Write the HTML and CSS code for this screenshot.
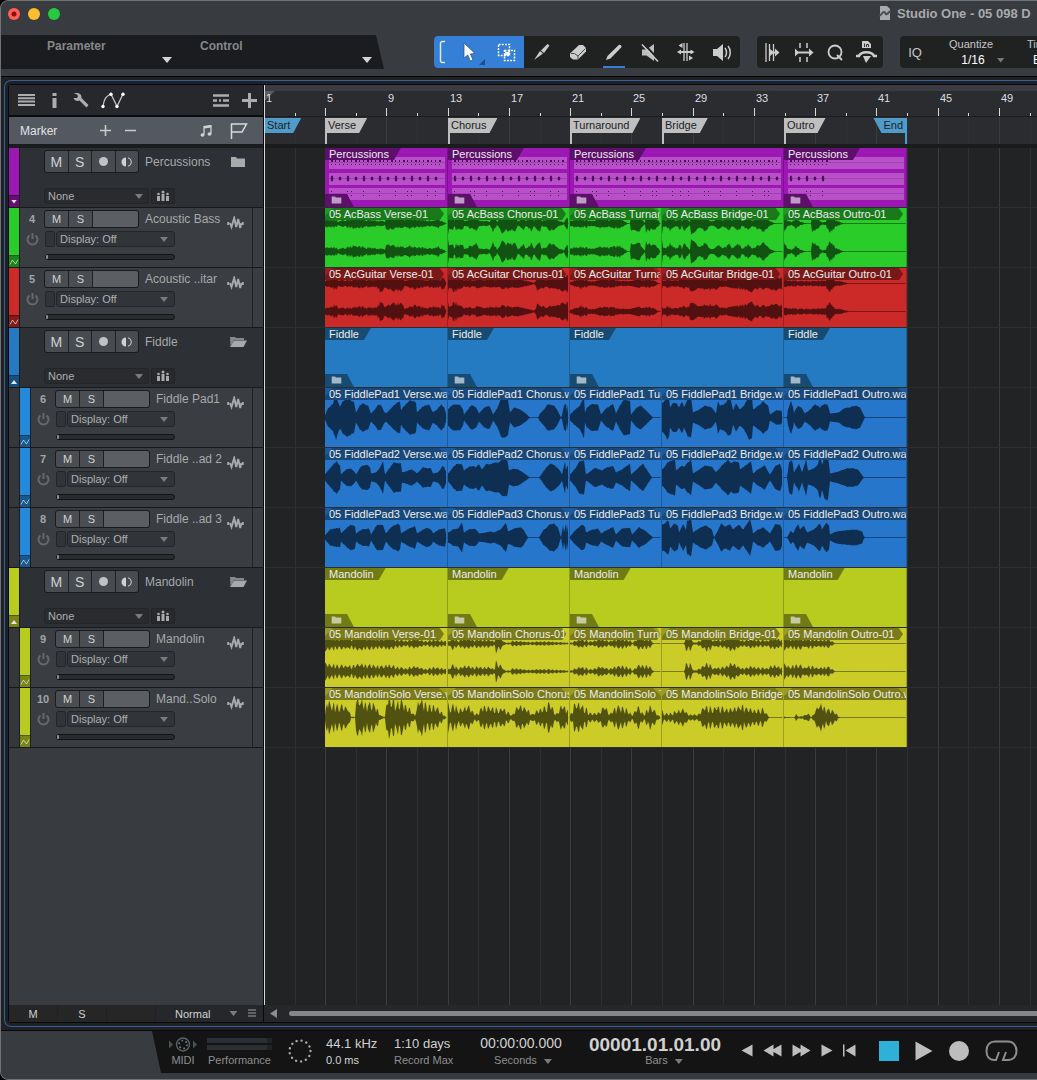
FILE: index.html
```html
<!DOCTYPE html>
<html lang="en">
<head>
<meta charset="utf-8">
<title>Studio One</title>
<link rel="stylesheet" href="styles.css">
</head>
<body>
<svg class="sprite" aria-hidden="true">
  <symbol id="i-folder" viewBox="0 0 16 12"><path d="M1 1h5l1 1.500h8V11H1z" fill="currentColor"/></symbol>
  <symbol id="i-folder-open" viewBox="0 0 18 12"><path d="M1 1h5l1 1h8v2H5L1.500 10z" fill="currentColor" opacity=".75"/><path d="M5 4.500h13L14.500 11H1z" fill="currentColor"/></symbol>
  <symbol id="i-wave" viewBox="0 0 17 14"><path d="M1.200 6v3M3 7l1.500 4L7.200 2l2 9 2-8 2 9 1.300-5M15.800 6v3" fill="none" stroke="currentColor" stroke-width="1.900"/></symbol>
  <symbol id="i-power" viewBox="0 0 13 13"><path d="M3.500 2.500a5 5 0 1 0 6 0" fill="none" stroke="currentColor" stroke-width="2"/><path d="M6.500 0v6" stroke="currentColor" stroke-width="2"/></symbol>
  <symbol id="i-auto" viewBox="0 0 10 10"><path d="M1 7.500L3.500 3l3 4L9 2.500" fill="none" stroke="currentColor"/></symbol>
  <symbol id="i-bus" viewBox="0 0 14 12"><path d="M1 6h3v5H1zM5.500 4h3v7h-3zM10 6h3v5h-3z" fill="currentColor"/><circle cx="2.500" cy="4" r="1.300" fill="currentColor"/><circle cx="7" cy="2" r="1.500" fill="currentColor"/><circle cx="11.500" cy="4" r="1.300" fill="currentColor"/></symbol>
  <symbol id="i-monitor" viewBox="0 0 12 12"><path d="M5 1.500a4.500 4.500 0 0 0 0 9z" fill="currentColor"/><path d="M7 1.800a4.300 4.300 0 0 1 0 8.400" fill="none" stroke="currentColor"/></symbol>
</svg>

<div class="window">
  <header class="titlebar">
    <div class="lights">
      <button class="light light-close" aria-label="Close"></button>
      <button class="light light-min" aria-label="Minimize"></button>
      <button class="light light-max" aria-label="Zoom"></button>
    </div>
    <div class="title">
      <svg width="12" height="14" viewBox="0 0 12 14"><path d="M1 0h7l3 3v11H1z" fill="#a8aaac"/><path d="M0 10c3-1 3-4 5-4s1 3 3 2 2-3 4-3" fill="none" stroke="#4a4d51" stroke-width="2"/></svg>
      <span>Studio One - 05 098 D</span>
    </div>
  </header>

  <div class="toolbar">
    <div class="params">
      <div class="param"><span>Parameter</span><i class="tri"></i></div>
      <div class="param"><span>Control</span><i class="tri"></i></div>
    </div>
    <div class="group tools">
      <button class="tool on narrow" aria-label="Link tools"><svg width="8" height="24" viewBox="0 0 8 24"><path d="M6 1.500H3.500a2 2 0 0 0-2 2v17a2 2 0 0 0 2 2H6" fill="none" stroke="#dbe8f7" stroke-width="1.500"/></svg></button>
      <button class="tool on corner" aria-label="Arrow"><svg width="16" height="20" viewBox="0 0 16 20"><path d="M2 1l11 10.500-4.600.4 2.600 6-2.700 1.100-2.500-6L2 16z" fill="#fff" stroke="#1d4f8d" stroke-width=".7"/></svg></button>
      <button class="tool on" aria-label="Range"><svg width="19" height="19" viewBox="0 0 19 19"><path d="M1.500 1.500h11v11h-11z" fill="none" stroke="#fff" stroke-width="1.500" stroke-dasharray="2 1.200"/><path d="M7.500 7.500h10v10h-10z" fill="none" stroke="#fff" stroke-width="1.500" stroke-dasharray="2 1.200"/><path d="M7.500 8l2.500 1 2.500-1v5l-2-1-3 1 1-2.500z" fill="#fff"/></svg></button>
      <button class="tool" aria-label="Split"><svg width="18" height="18" viewBox="0 0 18 18"><path d="M1 17L7 8l3 2.500z" fill="#ccc"/><path d="M8 7.500L14.500 1l2 1.500L11 10z" fill="#ccc"/></svg></button>
      <button class="tool" aria-label="Eraser"><svg width="18" height="18" viewBox="0 0 18 18"><path d="M1 10.500L10 2h4l3 3v3.500L9 16.500H4L1 14z" fill="#ccc"/><path d="M2 10.500h3.500L9 13l7.500-7.500M9 13v3.500" fill="none" stroke="#4a4a4a"/></svg></button>
      <button class="tool paint" aria-label="Paint"><svg width="18" height="18" viewBox="0 0 18 18"><path d="M1 17l1.500-4L13.500 2.300c1.500-1.500 4 .7 2.700 2.300L5.500 15.500z" fill="#ccc"/></svg></button>
      <button class="tool" aria-label="Mute"><svg width="19" height="19" viewBox="0 0 19 19"><path d="M1 6.500h4.500L13 1v17l-7.500-5.500H1z" fill="#bdbdbd"/><path d="M2.500.500l16 17" stroke="#202221" stroke-width="2"/><path d="M1 1.500l16 17" stroke="#ccc" stroke-width="1.500"/></svg></button>
      <button class="tool" aria-label="Bend"><svg width="18" height="20" viewBox="0 0 18 20"><path d="M7 1v18M10 1v18" stroke="#ccc" stroke-width="1.300"/><path d="M1.500 3.500l4-2.500v5zM16 16l-4-2.500v5zM0 10l4-2.500v5zM17.500 10l-4-2.500v5z" fill="#ccc"/><path d="M3 10h12" stroke="#ccc" stroke-width="2"/></svg></button>
      <button class="tool" aria-label="Listen"><svg width="20" height="19" viewBox="0 0 20 19"><path d="M1 6h4l6-5v17l-6-5H1z" fill="#ccc"/><path d="M13 5c2 2.500 2 6.500 0 9M16 3c3 3.500 3 9.500 0 13" fill="none" stroke="#ccc" stroke-width="1.500"/></svg></button>
    </div>
    <div class="group macros">
      <button class="tool" aria-label="Strip silence"><svg width="15" height="19" viewBox="0 0 15 19"><path d="M1 0v19M4.500 1v17M8.500 1v17" stroke="#ccc" stroke-width="1.300"/><path d="M4 9.500h9" stroke="#ccc" stroke-width="2"/><path d="M4 5l5 4.500L4 14zM10 5.500l4.500 4-4.500 4z" fill="#ccc"/></svg></button>
      <button class="tool" aria-label="Stretch"><svg width="20" height="19" viewBox="0 0 20 19"><path d="M6 0v5M6 14v5M13 0v5M13 14v5" stroke="#ccc" stroke-width="1.500"/><path d="M3 9.500h14" stroke="#ccc" stroke-width="2"/><path d="M1 5.500l4 4-4 4zM15 5.500l4.500 4-4.500 4z" fill="#ccc"/></svg></button>
      <button class="tool" aria-label="Quantize"><svg width="17" height="17" viewBox="0 0 17 17"><circle cx="8" cy="8" r="6.500" fill="none" stroke="#ccc" stroke-width="1.800"/><path d="M10 11l5 5" stroke="#ccc" stroke-width="2"/></svg></button>
      <button class="tool" aria-label="Macro"><svg width="22" height="24" viewBox="0 0 22 24"><path d="M6 1h6l3 3v4H6z" fill="#ccc"/><path d="M8.500 3.500V7M10.500 7V4.500h2V7" stroke="#333" fill="none"/><path d="M0 16h3c2-5 13-5 15 0h3" fill="none" stroke="#ccc" stroke-width="2.500"/><path d="M7 16h8l-5 7z" fill="#ccc"/></svg></button>
    </div>
    <div class="group snap">
      <span class="iq">IQ</span>
      <div class="field"><span class="cap">Quantize</span><button class="val">1/16 <i class="tri dim"></i></button></div>
      <div class="field time"><span class="cap">Timebase</span><span class="val">Bars</span></div>
    </div>
  </div>

  <main class="stage">
    <div class="arrange">
      <section class="panel">
        <div class="panel-tools">
          <button class="ic" aria-label="Track list"><svg width="18" height="12" viewBox="0 0 18 12"><path d="M0 1h17M0 4.300h17M0 7.600h17M0 11h17" stroke="#aaacae" stroke-width="2"/></svg></button>
          <button class="ic" aria-label="Inspector"><svg width="5" height="15" viewBox="0 0 5 15"><path d="M.5 0h4v3h-4zM.5 5h4v10h-4z" fill="#aaacae"/></svg></button>
          <button class="ic" aria-label="Setup"><svg width="16" height="16" viewBox="0 0 16 16"><path d="M1 1.500C5 0 9 2 8.500 6L15.500 13l-2 2.500L6.500 8.500C4 9.500 1.500 8.500.5 6H4l1-2-1-1.500z" fill="#aaacae"/></svg></button>
          <button class="ic" aria-label="Automation"><svg width="24" height="17" viewBox="0 0 24 17"><path d="M2 14.500C3 7 5 4 10 2l6 12.500L22 2" fill="none" stroke="#c4c6c8" stroke-width="1.300"/><g fill="#fff"><circle cx="2" cy="14.500" r="1.700"/><circle cx="10" cy="2.200" r="1.700"/><circle cx="16" cy="14.500" r="1.700"/><circle cx="22" cy="2.200" r="1.700"/></g></svg></button>
          <button class="ic far" aria-label="Track sizes"><svg width="17" height="13" viewBox="0 0 17 13"><path d="M0 1.500h16M0 11.500h16M0 6.500h4M6 6.500h2M10 6.500h6" stroke="#aaacae" stroke-width="2.500"/></svg></button>
          <button class="ic" aria-label="Add track"><svg width="15" height="15" viewBox="0 0 15 15"><path d="M7.500 0v15M0 7.500h15" stroke="#aaacae" stroke-width="3"/></svg></button>
        </div>
        <div class="marker-head">
          <span class="name">Marker</span>
          <button class="ic" aria-label="Add marker"><svg width="11" height="11" viewBox="0 0 11 11"><path d="M5.500 0v11M0 5.500h11" stroke="#c8cacc" stroke-width="1.600"/></svg></button>
          <button class="ic" aria-label="Remove marker"><svg width="11" height="11" viewBox="0 0 11 11"><path d="M0 5.500h11" stroke="#c8cacc" stroke-width="1.600"/></svg></button>
          <button class="ic far" aria-label="Timebase"><svg width="12" height="12" viewBox="0 0 12 12"><path d="M4 9.500V1.500l7-1v8" fill="none" stroke="#d0d2d4" stroke-width="1.300"/><path d="M4 2.500l7-1" stroke="#d0d2d4" stroke-width="2"/><ellipse cx="2.500" cy="10" rx="2" ry="1.700" fill="#d0d2d4"/><ellipse cx="9.500" cy="9" rx="2" ry="1.700" fill="#d0d2d4"/></svg></button>
          <button class="ic flag" aria-label="Marker list"><svg width="18" height="16" viewBox="0 0 18 16"><path d="M1.500 16V1h15L12 9H2" fill="none" stroke="#d8dadc" stroke-width="1.500"/></svg></button>
        </div>
        <div class="tracks" id="tracks"></div>
        <div class="panel-foot">
          <button>M</button><button>S</button><span></span>
          <button class="mode">Normal <i class="tri dim"></i></button>
          <svg width="9" height="9" viewBox="0 0 9 9"><path d="M0 1h8M0 4h8M0 7h8" stroke="#76797c" stroke-width="1.500"/></svg>
        </div>
      </section>

      <section class="timeline">
        <div class="range-strip"></div>
        <div class="ruler" id="ruler"></div>
        <div class="canvas">
          <div class="gridlines" id="gridlines"></div>
          <div class="lanes">
            <div class="markers">
              <span class="marker start">Start</span>
              <span class="marker c2">Verse</span>
              <span class="marker c3">Chorus</span>
              <span class="marker c4">Turnaround</span>
              <span class="marker c5">Bridge</span>
              <span class="marker c6">Outro</span>
              <span class="marker end">End</span>
            </div>
            <div id="lanes"></div>
          </div>
        </div>
        <div class="hscroll"><button class="left" aria-label="Scroll left"></button><div class="thumb"></div></div>
        <div class="playhead"></div>
      </section>
    </div>
  </main>

  <footer class="transport">
    <div class="deck">
      <div class="stat midi">
        <svg width="28" height="15" viewBox="0 0 28 15"><path d="M0 3.500l4 4-4 4zM24 3.500l4 4-4 4z" fill="#46525a"/><circle cx="14" cy="7.500" r="6.500" fill="none" stroke="#56636b" stroke-width="1.400"/><circle cx="14" cy="7.500" r="4" fill="none" stroke="#6c777e" stroke-width="1.700" stroke-dasharray="1.700 2.500"/></svg>
        <span class="lbl">MIDI</span>
      </div>
      <div class="stat perf"><div class="meter"></div><div class="meter"></div><span class="lbl">Performance</span></div>
      <svg class="spinner" width="24" height="24" viewBox="0 0 24 24"><circle cx="12" cy="12" r="10.500" fill="none" stroke="#a6a6a6" stroke-width="2.400" stroke-linecap="round" stroke-dasharray=".1 4.970"/></svg>
      <div class="stat rate"><span class="big">44.1 kHz</span><span class="lbl lit">0.0 ms</span></div>
      <div class="stat rec"><span class="big">1:10 days</span><span class="lbl">Record Max</span></div>
      <div class="stat secs"><span class="clock">00:00:00.000</span><span class="lbl">Seconds <i class="tri dim"></i></span></div>
      <div class="stat bars"><span class="pos">00001.01.01.00</span><span class="lbl">Bars <i class="tri dim"></i></span></div>
      <div class="keys seek">
        <button aria-label="Previous bar"><svg width="12" height="13" viewBox="0 0 12 13"><path d="M11.500.5v12L.5 6.500z"/></svg></button>
        <button aria-label="Rewind"><svg width="19" height="13" viewBox="0 0 19 13"><path d="M10.500.5v12L.5 6.500zM18.500.5v12L8 6.500z"/></svg></button>
        <button aria-label="Forward"><svg width="19" height="13" viewBox="0 0 19 13"><path d="M.5.5v12l10.500-6zM8.500.5v12l10-6z"/></svg></button>
        <button aria-label="Next bar"><svg width="12" height="13" viewBox="0 0 12 13"><path d="M.5.5v12l11-6z"/></svg></button>
        <button aria-label="Return to zero"><svg width="13" height="13" viewBox="0 0 13 13"><path d="M0 .5h1.500v12H0zM12.500.5v12l-10-6z"/></svg></button>
      </div>
      <div class="keys run">
        <button class="stop" aria-label="Stop"></button>
        <button aria-label="Play"><svg width="18" height="20" viewBox="0 0 18 20"><path d="M.5.5v19l17-9.500z"/></svg></button>
        <button class="record" aria-label="Record"></button>
        <button aria-label="Loop"><svg width="33" height="22" viewBox="0 0 33 22"><path d="M14 12l-3 8H9.500C4 20 1.500 16 1.500 11 1.500 5 5 1.500 10 1.500h13c5 0 8.500 4 8.500 9.500S28 20 23.500 20H18l3-8" fill="none" stroke="#8e8e8e" stroke-width="2"/></svg></button>
      </div>
    </div>
  </footer>
</div>
<script src="app.js"></script>
</body>
</html>
```
FILE: styles.css
```css
* { box-sizing: border-box; }
html { background: #000; }
body {
  margin: 0;
  font-family: "Liberation Sans", Arial, Helvetica, sans-serif;
  font-size: 11px;
  color: #b4b6b8;
  overflow: hidden;
}
button, select, input { font: inherit; color: inherit; margin: 0; }
button { background: none; border: 0; padding: 0; white-space: nowrap; }
svg { display: block; }
.sprite { display: none; }
.tri {
  display: inline-block;
  width: 10px; height: 6px;
  background: #d2d4d5;
  clip-path: polygon(0 0, 100% 0, 50% 100%);
}
.tri.dim { background: #797b7d; width: 8px; height: 5px; }

.window {
  position: relative;
  display: flex;
  flex-direction: column;
  min-height: 100vh;
  border-radius: 8px 0 0 8px;
  overflow: hidden;
  background: #383b3f;
}
.window::after {
  content: "";
  position: absolute;
  inset: 0 -10px 0 0;
  border: 1px solid #6e7274;
  border-radius: 8px 0 0 8px;
  pointer-events: none;
}

/* title bar */
.titlebar { display: flex; align-items: center; height: 28px; padding-left: 8px; }
.lights { display: flex; gap: 8px; }
.light { width: 12px; height: 12px; border-radius: 50%; }
.light-close { background: radial-gradient(circle, #8f0a08 0 2px, #fe5f57 3px); }
.light-min { background: #febc2e; }
.light-max { background: #28c840; }
.title {
  display: flex;
  align-items: center;
  gap: 6px;
  width: 158px;
  margin-left: auto;
  padding-bottom: 2px;
  overflow: hidden;
  white-space: nowrap;
  font-weight: bold;
  font-size: 13px;
  color: #a8aaac;
}
.title svg { flex: none; }

/* toolbar */
.toolbar {
  display: flex;
  align-items: center;
  gap: 17px;
  height: 48px;
  overflow: hidden;
}
.params {
  display: flex;
  flex: none;
  width: 384px; height: 34px;
  margin-right: 33px;
  background: #1a1c20;
  clip-path: polygon(0 0, 376px 0, 100% 100%, 0 100%);
}
.param {
  position: relative;
  flex: none;
  width: 177px;
  padding: 4px 0 0 47px;
  font-weight: bold;
  font-size: 12px;
  color: #85878a;
}
.param + .param { width: 200px; padding-left: 23px; }
.param .tri { position: absolute; right: 5px; bottom: 6px; }
.group {
  display: flex;
  flex: none;
  height: 32px;
  border-radius: 4px;
  background: #202221;
  overflow: hidden;
}
.tool { display: grid; place-items: center; position: relative; width: 36px; height: 32px; }
.tool.narrow { width: 18px; }
.tool.on { background: #357fd6; }
.tool.corner::after {
  content: "";
  position: absolute;
  right: 3px; bottom: 3px;
  width: 6px; height: 6px;
  background: #1d4f8d;
  clip-path: polygon(100% 0, 100% 100%, 0 100%);
}
.tool.paint::after {
  content: "";
  position: absolute;
  left: 7px; right: 7px; bottom: 0;
  height: 2px;
  background: #357fd6;
}
.macros { width: 126px; }
.macros .tool { width: 32px; }
.snap { border-radius: 4px 0 0 4px; }
.iq { flex: none; align-self: center; width: 30px; text-align: center; font-size: 13px; color: #c4c6c8; }
.field {
  display: flex;
  flex: none;
  flex-direction: column;
  align-items: center;
  width: 82px;
  line-height: 16px;
  color: #c4c6c8;
}
.field .val { display: flex; align-items: center; gap: 12px; padding-left: 24px; font-size: 12px; color: #fff; }
.field.time { align-items: flex-start; width: 90px; padding-left: 15px; }
.field.time .val { padding-left: 6px; }

/* arrangement frame */
.stage {
  display: flex;
  flex: 1;
  padding: 3px 0 3px 4px;
  border-top: 1px solid #050505;
  background: #202124;
}
.arrange {
  display: flex;
  flex: 1;
  min-width: 0;
  padding: 3px 0 3px 3px;
  border: 1px solid #31609c;
  border-right: 0;
  border-radius: 7px 0 0 7px;
}
.panel {
  display: flex;
  flex: none;
  flex-direction: column;
  width: 256px;
  border: 1px solid #08090a;
  border-radius: 3px 0 0 3px;
  background: #383b3f;
}
.ic { display: grid; place-items: center; }
.far { margin-left: auto; }
.panel-tools {
  display: flex;
  align-items: center;
  height: 32px;
  padding: 0 6px 0 9px;
  gap: 12px;
  border-bottom: 2px solid #0b0c0d;
  background: #26282b;
}
.panel-tools .ic:nth-child(2) { width: 13px; }
.marker-head {
  display: flex;
  align-items: center;
  gap: 14px;
  height: 31px;
  padding: 0 15px 0 11px;
  border-bottom: 4px solid #1a1b1d;
  background: #545860;
}
.marker-head .name { width: 66px; font-size: 12px; color: #e2e3e5; }
.marker-head .flag { margin-left: 4px; }

/* track list */
.tracks { flex: 1; }
.track { display: flex; height: 60px; border-bottom: 1px solid #17181a; background: #3a3d41; }
.track.folder { background: #2d3034; }
.indent { width: 11px; border-right: 1px solid #1c1d20; background: #34373b; }
.strip {
  display: flex;
  flex: none;
  flex-direction: column;
  width: 11px;
  border-right: 1px solid #1c1d20;
  background: var(--c);
}
.strip span {
  display: grid;
  place-items: center;
  height: 12px;
  margin-top: auto;
  border-top: 1px solid rgba(0, 0, 0, .3);
  background: rgba(0, 0, 0, .35);
  color: rgba(255, 255, 255, .6);
}
.strip i { width: 6px; height: 4px; background: #e6e6e6; clip-path: polygon(0 0, 100% 0, 50% 100%); }
.strip .up i { transform: rotate(180deg); }
.info {
  display: flex;
  flex: 1;
  flex-direction: column;
  min-width: 0;
  padding: 2px 8px 0 0;
}
.audio .info { border-right: 1px solid #202225; }
.gutter { width: 10px; }
.folder .info { padding: 2px 16px 0 24px; }
.line { display: flex; align-items: center; height: 18px; }
.folder .line { height: 23px; }
.num { width: 24px; text-align: center; font-weight: bold; color: #a3a5a7; }
.name { font-size: 12px; }
.line .name { flex: 1; padding-left: 6px; white-space: nowrap; overflow: hidden; color: #a7a9ab; }
.line > svg { flex: none; color: #a7a9ab; }
.audio .line > svg { margin-top: 8px; }
.btns {
  display: flex;
  width: 95px; height: 18px;
  border: 1px solid #191b1d;
  border-radius: 3px;
  background: #1e2022;
  gap: 1px;
  overflow: hidden;
}
.btns button { display: grid; place-items: center; width: 23px; background: #4a4d52; color: #cfd1d3; }
.btns .arm { flex: 1; background: #5b5f63; }
.folder .btns { height: 23px; }
.folder .btns button { width: auto; flex: 1; font-size: 14px; background: #484b4f; }
.dot { width: 9px; height: 9px; border-radius: 50%; background: #c0c2c4; }
.line2 { display: flex; align-items: center; height: 16px; margin-top: 3px; padding-right: 69px; }
.power { display: grid; place-items: center; width: 25px; padding-right: 1px; color: #66696c; }
.slot { width: 10px; height: 16px; margin-right: 1px; border: 1px solid #232528; border-radius: 2px; background: #313438; }
.pick { position: relative; flex: 1; display: flex; }
.pick select {
  width: 100%; height: 16px;
  padding: 0 0 1px 3px;
  border: 1px solid #232528;
  border-radius: 3px;
  background: #313438;
  appearance: none;
  outline: 0;
  color: #aeb0b2;
}
.pick .tri { position: absolute; right: 7px; top: 6px; }
.folder .line2 { margin-top: 15px; padding-right: 72px; gap: 2px; }
.folder .pick select { background: #292b2e; }
.folder .pick .tri { right: 6px; }
.bus { display: grid; place-items: center; width: 24px; height: 16px; border: 1px solid #222427; border-radius: 2px; background: #27292c; color: #a7a9ab; }
.send {
  appearance: none;
  flex: none;
  width: auto; height: 6px;
  margin: 7px 69px 0 25px;
  border: 1px solid #121315;
  border-radius: 3px;
  background: #2a2c2f;
}
.send::-webkit-slider-thumb { appearance: none; width: 2px; height: 4px; background: #8d8f91; border-radius: 1px; }
.panel-foot {
  display: flex;
  align-items: center;
  height: 17px;
  background: #26272b;
  color: #d0d2d4;
}
.panel-foot > button, .panel-foot > span { width: 49px; height: 17px; border-right: 1px solid #202123; background: #252625; }
.panel-foot > .mode { display: flex; align-items: center; gap: 19px; width: 85px; padding-left: 19px; border: 0; background: none; }
.panel-foot > svg { margin-left: 7px; }

/* timeline */
.timeline {
  position: relative;
  display: flex;
  flex: 1;
  flex-direction: column;
  min-width: 0;
  overflow: hidden;
  border: solid #08090a;
  border-width: 1px 0;
  background: #222325;
  --cols: 61px 123px 122px 92px 122px 123px;
}
.range-strip { height: 6px; background: #3a3c42; }
.ruler { display: flex; height: 26px; border-bottom: 1px solid #1b1c1e; background: #2b2c30; }
.beat { display: flex; flex: none; align-items: flex-end; }
.beat::before { content: ""; width: 1px; height: 3px; background: #d6d8da; }
.beat.major::before { height: 8px; }
.beat span { align-self: flex-start; padding: 1px 0 0 1px; color: #dcdee0; }
.beat:first-child { background: linear-gradient(135deg, #5c5e62 7px, transparent 8px); }
.canvas { display: grid; flex: 1; }
.canvas > * { grid-area: 1 / 1; min-width: 0; }
.gridlines { display: flex; overflow: hidden; background: linear-gradient(#2b2c30 27px, #222325 27px); }
.gridlines i { flex: none; border-left: 1px solid #2e3033; }
.gridlines i.major { border-left-color: #393c40; }
.markers {
  display: grid;
  grid-template-columns: var(--cols);
  height: 31px;
  padding-top: 1px;
  border-bottom: 4px solid #1a1b1d;
}
.marker {
  grid-row: 1;
  justify-self: start;
  height: 26px;
  padding: 0 11px 0 3px;
  line-height: 14px;
  color: #1d1e1f;
  white-space: nowrap;
  background: #bfbfbf;
  clip-path: polygon(0 0, 100% 0, calc(100% - 8px) 15px, 2px 15px, 2px 100%, 0 100%);
}
.marker.start { grid-column: 1; background: #4f9bc9; clip-path: polygon(0 0, 100% 0, calc(100% - 8px) 15px, 0 15px); }
.marker.c2 { grid-column: 2; }
.marker.c3 { grid-column: 3; }
.marker.c4 { grid-column: 4; }
.marker.c5 { grid-column: 5; }
.marker.c6 { grid-column: 6; }
.marker.end {
  grid-column: 6;
  justify-self: end;
  padding: 0 4px 0 10px;
  background: #4f9bc9;
  clip-path: polygon(0 0, 100% 0, 100% 100%, calc(100% - 2px) 100%, calc(100% - 2px) 15px, 8px 15px);
}
.lane { display: grid; grid-template-columns: var(--cols); height: 60px; border-bottom: 1px solid #2b2d2f; }
.clip {
  position: relative;
  overflow: hidden;
  border-right: 1px solid rgba(0, 0, 0, .22);
  background: var(--c);
}
.clip:first-child { grid-column-start: 2; }
.wide { grid-column: span 2; }
.clip > svg { position: absolute; inset: 0; }
.clip .tab {
  position: relative;
  width: max-content;
  max-width: 100%;
  height: 12px;
  padding: 0 12px 0 4px;
  line-height: 12px;
  white-space: nowrap;
  overflow: hidden;
  color: #ededed;
  background: var(--h);
  clip-path: polygon(0 0, 100% 0, calc(100% - 7px) 100%, 0 100%);
}
.wavclip .tab {
  min-width: calc(100% - 3px);
  padding-right: 0;
  clip-path: polygon(0 0, calc(100% - 4px) 0, 100% 6px, calc(100% - 4px) 100%, 0 100%);
}
.wavclip .tab.full { clip-path: none; min-width: 100%; }
.wavclip::before, .wavclip::after {
  content: "";
  position: absolute;
  z-index: 1;
  top: 0;
  width: 8px; height: 8px;
  background: var(--c);
  opacity: .4;
}
.wavclip::before { left: 0; clip-path: polygon(0 0, 100% 0, 0 100%); }
.wavclip::after { right: 0; clip-path: polygon(0 0, 100% 0, 100% 100%); }
.packed {
  position: absolute;
  left: 0; bottom: 0;
  width: 29px; height: 13px;
  padding: 1px 0 0 6px;
  color: rgba(255, 255, 255, .6);
  background: var(--h);
  clip-path: polygon(0 0, 22px 0, 100% 100%, 0 100%);
}
.hscroll { display: flex; align-items: center; gap: 12px; height: 17px; padding-left: 6px; background: #26272b; }
.hscroll .left { width: 7px; height: 9px; background: #8c8d8f; clip-path: polygon(100% 0, 100% 100%, 0 50%); }
.thumb { flex: 1; height: 5px; border-radius: 3px 0 0 3px; background: #858688; }
.playhead { position: absolute; left: 0; top: 0; bottom: 17px; width: 1px; background: #d8d8d8; }

/* transport */
.transport { height: 50px; padding: 0 0 6px 152px; border-top: 1px solid #08090a; }
.deck {
  display: flex;
  height: 42px;
  padding-left: 18px;
  background: #141414;
  clip-path: polygon(0 0, 100% 0, 100% 100%, 9px 100%);
}
.stat { display: flex; flex: none; flex-direction: column; align-items: center; white-space: nowrap; }
.lbl { line-height: 14px; color: #8f8f8f; }
.lbl.lit { color: #d4d4d4; }
.lbl .tri { margin-left: 4px; }
.big, .clock, .pos { height: 22px; line-height: 25px; color: #d0d0d0; }
.big { font-size: 13px; }
.clock { font-size: 14px; }
.pos { font-weight: bold; font-size: 19px; line-height: 28px; }
.midi { width: 26px; padding-top: 6px; }
.midi .lbl { margin-top: 1px; }
.perf { width: 65px; margin-left: 11px; padding-top: 7px; gap: 2px; align-items: stretch; }
.perf .lbl { margin-top: 1px; text-align: center; }
.meter { height: 5px; background: linear-gradient(90deg, #2b2e33 60px, #222324 60px); }
.spinner { flex: none; margin: 8px 0 0 16px; }
.rate { align-items: flex-start; width: 56px; margin-left: 14px; }
.rec { align-items: flex-start; width: 62px; margin-left: 12px; }
.secs { width: 84px; margin-left: 23px; }
.secs .lbl { padding-left: 4px; }
.bars { width: 136px; margin-left: 24px; }
.bars .lbl { padding-left: 18px; }
.keys { display: flex; flex: none; align-items: center; padding-bottom: 3px; }
.keys svg { fill: #bdbdbd; }
.seek { gap: 10px; margin-left: 18px; }
.run { gap: 16px; margin-left: 23px; }
.stop { width: 20px; height: 20px; background: #2eb0d9; }
.record { width: 20px; height: 20px; border-radius: 50%; background: #bdbdbd; }
```
FILE: app.js
```js
// Each wave is a list of "position amplitude" pairs, in pixels from the clip start.
const tracks = [
  { type: "folder", name: "Percussions", color: "#9c17b3", head: "#5d0f6b", icon: "folder", clip: "drums" },
  { num: 4, name: "Acoustic Bass", color: "#29cc29", head: "#187a18", wave: "#125212", file: "AcBass", suffix: "-01", stereo: true, waves: [
    "0 4 8 5 13 3 20 4 27 6 35 5 45 4 56 3 60 2 61 7 70 6 78 5 84 6 90 4 100 4 108 3 113 5 120 1 121 0",
    "0 11 4 10 6 3 9 9 15 7 17 3 20 4 27 10 31 3 38 4 42 2 45 11 49 2 53 10 60 9 67 10 70 2 76 8 78 3 84 10 86 3 92 11 94 3 101 8 106 9 110 4 116 1 118 7 121 5",
    "0 4 10 5 20 4 30 5 40 4 50 6 57 1 60 0 61 11 63 8 70 8 75 1 76 10 83 7 89 4 90 0",
    "0 11 1 7 5 4 9 9 14 3 18 8 20 3 23 10 28 2 29 11 33 11 38 6 44 10 48 3 54 4 58 8 60 3 67 9 70 3 77 9 80 3 86 8 90 3 99 10 104 8 108 3 114 0",
    "0 10 3 4 8 2 13 7 16 2 24 0 27 0 28 9 32 8 38 1 42 3 46 11 51 5 57 1 61 0"] },
  { num: 5, name: "Acoustic ..itar", color: "#cc2929", head: "#7a1818", wave: "#521010", file: "AcGuitar", suffix: "-01", stereo: true, waves: [
    "0 3 10 7 15 4 25 4 35 5 50 4 56 10 60 5 70 9 76 9 80 4 90 6 100 4 110 5 115 4 118 8 121 2",
    "0 8 10 9 16 4 30 5 45 5 57 6 70 5 80 3 86 1 88 3 89 8 100 5 110 8 118 10 121 8",
    "0 2 11 6 20 3 35 5 50 3 65 4 80 5 88 1 90 0",
    "0 5 15 4 25 6 31 9 40 7 50 8 60 4 75 6 90 10 92 8 105 6 110 9 118 7 120 6",
    "0 4 20 3 38 3 42 5 46 10 50 4 58 2 66 0"] },
  { type: "folder", name: "Fiddle", color: "#247bc2", head: "#184b73", icon: "folder-open", clip: "plain" },
  { num: 6, sub: true, name: "Fiddle Pad1", color: "#2676cc", strip: "#2688d9", head: "#18487a", wave: "#0f2f52", file: "FiddlePad1", suffix: ".wav", waves: [
    "0 2 3 9 8 14 11 22 13 16 15 11 18 16 21 19 25 18 29 15 31 5 35 12 38 14 43 12 46 4 50 8 53 13 56 12 59 6 61 4 67 10 72 15 75 16 76 7 80 13 85 17 89 16 91 14 92 5 97 10 100 12 104 13 107 7 108 5 112 8 116 13 119 10 121 4",
    "0 8 3 12 8 13 12 13 15 8 16 3 20 8 24 13 28 10 31 4 36 10 41 12 44 6 45 3 49 9 53 19 58 20 60 17 62 5 66 10 72 8 78 4 82 0 90 0 92 4 96 8 99 13 106 12 109 8 113 0 114 2 116 12 118 14 119 5 120 13 121 1",
    "0 3 4 7 10 12 14 21 15 5 17 10 22 14 28 13 31 3 36 9 43 13 46 4 50 12 54 18 60 17 61 3 66 9 71 12 76 7 83 0",
    "0 14 5 21 7 20 8 10 11 15 15 14 17 10 20 16 22 10 26 20 29 19 31 5 37 8 43 12 50 10 54 4 56 16 58 12 62 13 66 18 69 17 71 7 74 14 78 8 82 12 87 22 90 20 91 8 95 11 101 16 106 12 108 3 114 7 119 7 120 5",
    "3 0 4 8 7 17 9 10 10 5 14 12 18 9 21 4 25 7 31 13 36 10 41 14 44 12 46 4 55 5 60 9 66 10 72 12 76 10 80 2 81 0"] },
  { num: 7, sub: true, name: "Fiddle ..ad 2", color: "#2676cc", strip: "#2688d9", head: "#18487a", wave: "#0f2f52", file: "FiddlePad2", suffix: ".wav", waves: [
    "0 3 4 8 9 14 12 16 15 12 16 3 21 8 26 9 30 5 31 3 36 11 42 13 45 10 46 4 51 5 55 10 58 16 60 3 65 10 69 15 76 14 77 5 83 7 87 8 92 4 98 10 106 9 108 4 113 5 118 12 120 8 121 6",
    "0 4 4 9 9 14 14 13 16 7 20 10 25 12 28 10 31 13 34 8 38 14 42 13 46 15 50 15 55 18 59 19 61 7 65 9 70 8 75 5 82 0 91 0 94 4 98 10 103 14 107 12 112 7 114 3 117 16 118 8 120 12 121 1",
    "0 3 6 10 9 16 14 17 16 3 20 6 25 10 29 8 32 7 37 10 43 11 46 5 52 8 57 12 60 14 61 3 67 8 73 14 76 9 82 0",
    "0 8 5 14 9 17 13 18 14 7 20 12 22 10 25 15 29 17 31 4 37 8 43 12 50 11 54 5 60 12 66 18 69 14 72 16 77 15 78 8 85 13 89 16 91 4 97 9 103 12 106 6 108 3 113 11 118 14 120 7",
    "3 0 5 15 8 18 10 5 15 14 18 5 22 18 24 7 30 9 34 13 36 22 38 12 41 23 44 22 46 4 55 6 63 9 70 9 74 8 79 1 80 0"] },
  { num: 8, sub: true, name: "Fiddle ..ad 3", color: "#2676cc", strip: "#2688d9", head: "#18487a", wave: "#0f2f52", file: "FiddlePad3", suffix: ".wav", waves: [
    "0 2 5 8 10 9 15 10 16 4 21 9 26 13 30 11 31 4 37 8 44 9 46 3 52 13 58 12 61 4 66 10 73 14 75 12 76 4 82 8 90 11 92 4 97 7 102 10 107 7 108 4 114 8 120 9 121 4",
    "0 5 5 8 10 9 14 15 16 5 21 8 27 9 31 4 37 5 43 6 46 5 48 6 54 9 58 15 60 6 66 9 73 10 76 7 80 0 91 0 95 7 102 13 106 14 110 10 113 0 115 12 116 5 118 14 119 5 120 13",
    "0 1 5 7 12 13 15 11 16 5 22 8 28 9 31 4 38 8 43 10 46 3 52 9 60 10 62 3 69 10 75 7 83 0",
    "0 13 5 16 7 16 8 9 12 14 16 12 17 5 21 13 24 8 25 17 29 18 31 5 38 10 44 12 50 8 52 0 56 7 59 14 63 11 68 13 71 8 77 13 81 8 88 18 90 10 91 4 96 8 101 10 106 6 108 4 113 13 118 13 120 8",
    "3 0 7 7 9 4 14 14 16 8 20 12 23 5 30 8 36 14 38 8 42 15 45 12 46 3 52 6 62 7 72 8 78 6 80 1 81 0"] },
  { type: "folder", name: "Mandolin", color: "#b8cc1f", head: "#707c12", icon: "folder-open", clip: "plain" },
  { num: 9, sub: true, name: "Mandolin", color: "#cccc29", strip: "#b8cc1f", head: "#7a7a18", wave: "#525210", file: "Mandolin", suffix: "-01", stereo: true, spiky: true, waves: [
    "0 10 10 8 30 7 31 9 45 8 60 6 61 8 80 4 90 6 100 3 110 5 121 3",
    "0 2 3 9 10 4 16 7 30 5 40 6 46 3 48 12 52 9 56 2 62 1 64 4 80 2 96 3 110 2 121 1",
    "0 1 10 6 20 3 30 6 40 3 50 7 60 5 62 1 70 8 80 6 84 0 90 0",
    "0 0 22 0 24 11 28 9 32 1 36 3 46 11 52 4 60 5 70 10 80 4 90 6 105 4 110 8 120 5",
    "0 9 6 6 15 9 20 5 26 7 34 4 44 6 48 3 52 0"] },
  { num: 10, sub: true, name: "Mand..Solo", color: "#cccc29", strip: "#b8cc1f", head: "#7a7a18", wave: "#525210", file: "MandolinSolo", suffix: ".wav", spiky: true, waves: [
    "0 3 2 22 8 16 14 15 22 14 26 2 30 0 31 22 40 18 50 16 56 2 60 1 62 24 70 18 78 20 86 8 90 2 94 22 104 14 112 12 120 2",
    "0 16 6 14 12 10 20 14 28 4 31 5 34 16 44 12 56 10 64 3 70 14 78 12 84 4 94 12 102 18 108 4 114 16 121 8",
    "0 3 6 20 12 15 20 6 30 6 34 15 40 4 48 14 58 10 62 3 68 12 74 4 80 14 88 3 91 1",
    "0 8 6 4 14 8 22 10 28 3 36 4 42 14 50 12 60 12 70 10 80 15 90 9 100 11 106 3 108 0",
    "0 1 10 0 12 4 16 1 20 3 24 5 28 1 34 14 38 15 44 10 50 8 56 0"] },
];
const sections = ["Verse", "Chorus", "Turnaround", "Bridge", "Outro"];
const widths = [123, 122, 92, 122, 123];

const icon = (id, w, h) => `<svg width="${w}" height="${h}" aria-hidden="true"><use href="#i-${id}"/></svg>`;

function trackRow(t) {
  const strip = `<div class="strip" style="--c:${t.strip || t.color}">`;
  if (t.type === "folder") {
    const up = t.icon === "folder-open";
    return `<div class="track folder">${strip}<span class="${up ? "up" : ""}"><i></i></span></div>
      <div class="info">
        <div class="line"><div class="btns"><button>M</button><button>S</button><button aria-label="Record"><span class="dot"></span></button><button aria-label="Monitor">${icon("monitor", 12, 12)}</button></div>
          <span class="name">${t.name}</span>${icon(t.icon, 18, 12)}</div>
        <div class="line2"><label class="pick"><select aria-label="${t.name} bus"><option>None</option></select><i class="tri dim"></i></label>
          <button class="bus" aria-label="Bus">${icon("bus", 14, 12)}</button></div>
      </div></div>`;
  }
  return `<div class="track audio">${t.sub ? '<div class="indent"></div>' : ""}${strip}<span>${icon("auto", 10, 10)}</span></div>
    <div class="info">
      <div class="line"><span class="num">${t.num}</span><div class="btns"><button>M</button><button>S</button><button class="arm" aria-label="Meter"></button></div>
        <span class="name">${t.name}</span>${icon("wave", 17, 14)}</div>
      <div class="line2"><button class="power" aria-label="Power">${icon("power", 13, 13)}</button><button class="slot" aria-label="Color"></button>
        <label class="pick"><select aria-label="Track ${t.num} automation"><option>Display: Off</option></select><i class="tri dim"></i></label></div>
      <input class="send" type="range" min="0" max="100" value="0" aria-label="Track ${t.num} send">
    </div><div class="gutter"></div></div>`;
}

function amplitudes(spec, width, t) {
  const n = spec.split(" ").map(Number);
  const out = [];
  for (let x = 0; x < width - 1; x++) {
    let a = 0;
    for (let k = 0; k + 3 < n.length; k += 2) {
      if (x >= n[k] && x <= n[k + 2]) {
        a = n[k + 1] + (n[k + 3] - n[k + 1]) * (x - n[k]) / (n[k + 2] - n[k]);
        break;
      }
    }
    const noise = Math.abs(Math.sin(x * 12.9 + width) * 43758.5) % 1;
    if (t.spiky) a *= x % 4 < 2 ? .7 + noise * .3 : .3 + noise * .35;
    else if (t.stereo) a *= .55 + noise * .6;
    else a *= .95 + noise * .1;
    out.push(a);
  }
  return out;
}

function wave(spec, width, t) {
  const amps = amplitudes(spec, width, t);
  const shape = (mid, gain) => {
    const top = amps.map((a, x) => `${x} ${(mid - Math.max(a * gain, .3)).toFixed(1)}`);
    const bottom = amps.map((a, x) => `${x} ${(mid + Math.max(a * gain, .3)).toFixed(1)}`).reverse();
    return `<polygon points="${top.concat(bottom).join(" ")}"/><rect x="0" y="${mid - .5}" width="${width}" height="1" opacity=".35"/>`;
  };
  const body = t.stereo ? shape(15.5, .9) + shape(43.5, 1) : shape(29.5, 1);
  return `<svg width="${width}" height="59" fill="${t.wave}">${body}</svg>`;
}

function drums(width, last) {
  const end = last ? 44 : width - 5;
  let s = [9, 25, 40].map(y => `<rect x="4" y="${y}" width="${width - 7}" height="12" fill="#b850c8"/><rect x="4" y="${y + 5}" width="${width - 7}" height="1" fill="#a53db8"/>`).join("");
  for (let x = 6, k = 0; x < end; x += 4, k++) {
    s += `<rect x="${x}" y="12" width="${k % 3 ? 1 : 2}" height="2"/><rect x="${x}" y="16" width="1" height="1"/>`;
    if (k % 2 === 0) s += `<ellipse cx="${x + 1}" cy="30.500" rx="1.300" ry="${k % 4 ? 2 : 3}"/>`;
    if (k % 4 === 0 || k % 7 === 5) s += `<rect x="${x}" y="43" width="1" height="1"/><rect x="${x}" y="47" width="1" height="1"/>`;
  }
  return `<svg width="${width}" height="59" fill="#4a1056">${s}</svg>`;
}

function lane(t) {
  const style = `--c:${t.color};--h:${t.head}`;
  if (t.type === "folder") {
    return `<div class="lane" style="${style}">` + [123, 122, 214, 123].map((w, i) =>
      `<div class="clip${i === 2 ? " wide" : ""}">${t.clip === "drums" ? drums(w, i === 3) : ""}<div class="tab">${t.name}</div><div class="packed">${icon("folder", 11, 10)}</div></div>`).join("") + "</div>";
  }
  const full = t.suffix === ".wav" ? " full" : "";
  return `<div class="lane" style="${style}">` + sections.map((s, i) =>
    `<div class="clip wavclip">${wave(t.waves[i], widths[i], t)}<div class="tab${full}">05 ${t.file} ${s}${t.suffix}</div></div>`).join("") + "</div>";
}

document.getElementById("tracks").innerHTML = tracks.map(trackRow).join("");
document.getElementById("lanes").innerHTML = tracks.map(lane).join("");

// Two bars per ruler cell; a number on every fourth bar.
const at = k => Math.round(k * 30.62);
let ruler = "", grid = "";
for (let k = 0; k < 60; k++) {
  const major = k % 2 === 0 ? " major" : "";
  const w = at(k + 1) - at(k);
  ruler += `<div class="beat${major}" style="width:${w}px">${major ? `<span>${k * 2 + 1}</span>` : ""}</div>`;
  grid += `<i class="${major}" style="width:${w}px"></i>`;
}
document.getElementById("ruler").innerHTML = ruler;
document.getElementById("gridlines").innerHTML = grid;
```
